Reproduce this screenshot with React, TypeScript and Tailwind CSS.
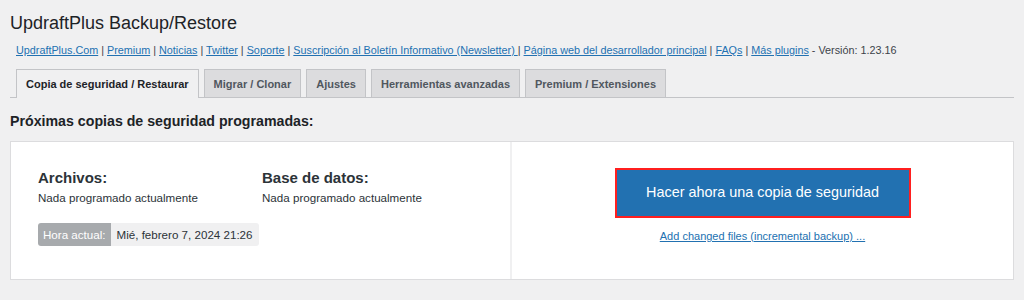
import React from 'react';

const links = [
  'UpdraftPlus.Com',
  'Premium',
  'Noticias',
  'Twitter',
  'Soporte',
  'Suscripción al Boletín Informativo (Newsletter) ',
  'Página web del desarrollador principal',
  'FAQs',
  'Más plugins',
];

const tabs = [
  'Copia de seguridad / Restaurar',
  'Migrar / Clonar',
  'Ajustes',
  'Herramientas avanzadas',
  'Premium / Extensiones',
];

export default function App() {
  return (
    <div className="min-h-[300px] w-[1024px] bg-[#f0f0f1] pl-[10px] pr-[10px] pt-[11px] text-[#1d2327] font-['Liberation_Sans',Arial,sans-serif]">
      {/* Title */}
      <h1 className="text-[18px] leading-[24px] font-normal text-[#1d2327]">UpdraftPlus Backup/Restore</h1>

      {/* Links */}
      <div className="mt-[7px] pl-[6px] text-[10.8px] leading-[16px] text-[#3c434a]">
        {links.map((l, i) => (
          <React.Fragment key={i}>
            <a href="#" className="text-[#2271b1] underline">{l}</a>
            {i < links.length - 1 ? ' | ' : ''}
          </React.Fragment>
        ))}
        <span> - Versión: 1.23.16</span>
      </div>

      {/* Tabs */}
      <div className="mt-[11px] flex items-end gap-[5px] border-b border-[#c3c4c7] pl-[6px]">
        {tabs.map((t, i) => (
          <div
            key={i}
            className={
              i === 0
                ? '-mb-px h-[29px] border border-b-0 border-[#c3c4c7] bg-[#f0f0f1] px-[9px] text-[11px] leading-[28px] font-bold text-[#1d2327]'
                : 'h-[28px] border border-b-0 border-[#c3c4c7] bg-[#dcdcde] px-[9px] text-[11px] leading-[28px] font-bold text-[#50575e]'
            }
          >
            {t}
          </div>
        ))}
      </div>

      {/* Section heading */}
      <h2 className="mt-[13px] text-[14.2px] leading-[20px] font-bold text-[#1d2327]">Próximas copias de seguridad programadas:</h2>

      {/* Panel */}
      <div className="mt-[10px] flex h-[139px] border border-[#dcdcde] bg-white">
        <div className="flex w-[501px] flex-col border-r-2 border-[#f0f0f1] pl-[27px] pt-[25px]">
          <div className="flex">
            <div className="w-[224px]">
              <div className="text-[15px] leading-[22px] font-bold text-[#2c3338]">Archivos:</div>
              <div className="mt-[1px] text-[11.6px] leading-[16px] text-[#2c3338]">Nada programado actualmente</div>
            </div>
            <div>
              <div className="text-[15px] leading-[22px] font-bold text-[#2c3338]">Base de datos:</div>
              <div className="mt-[1px] text-[11.6px] leading-[16px] text-[#2c3338]">Nada programado actualmente</div>
            </div>
          </div>
          <div className="mt-[17px] flex h-[23px] w-fit overflow-hidden rounded-[3px] text-[11.6px] leading-[23px]">
            <span className="bg-[#a7aaad] px-[5px] text-white">Hora actual:</span>
            <span className="bg-[#f0f0f1] px-[6px] text-[#2c3338]">Mié, febrero 7, 2024 21:26</span>
          </div>
        </div>
        <div className="flex flex-1 flex-col items-center pt-[26px]">
          <button className="h-[50px] w-[296px] border-2 border-[#ff1f1f] bg-[#2271b1] text-[14.4px] text-white">
            Hacer ahora una copia de seguridad
          </button>
          <a href="#" className="mt-[11px] text-[11px] leading-[14px] text-[#2271b1] underline">Add changed files (incremental backup) ...</a>
        </div>
      </div>
    </div>
  );
}
